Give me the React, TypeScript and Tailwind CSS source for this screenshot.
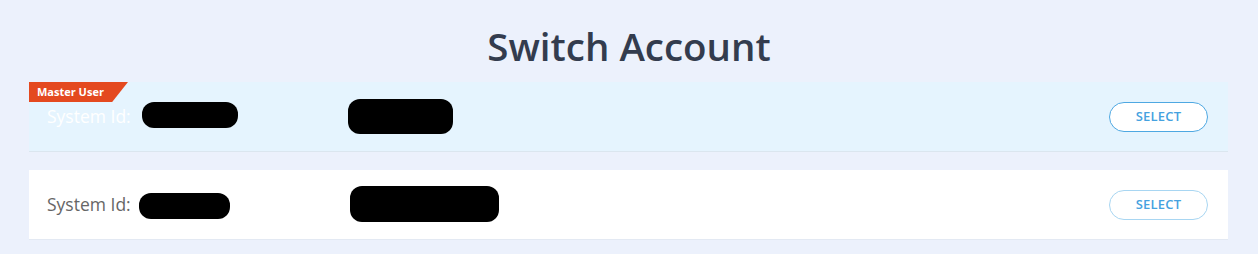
import React from "react";

function Blob({ w, h, className = "" }: { w: string; h: string; className?: string }) {
  return <div className={`bg-black rounded-[12px] ${w} ${h} ${className}`} />;
}

export default function App() {
  const font = { fontFamily: '"Open Sans", "Noto Sans", sans-serif' };
  return (
    <div className="w-[1258px] h-[254px] bg-[#ecf1fc] overflow-hidden" style={font}>
      <h1 className="mt-[22px] text-center text-[38.5px] leading-[48px] font-semibold text-[#333c4e]">
        Switch Account
      </h1>
      <div className="mt-[12px] pl-[29px] pr-[30px] flex flex-col gap-[18px]">
        <div className="relative h-[70px] bg-[#e5f4fe] border-b border-[#dbe6ef] flex items-center pl-[18px] pr-[20px]">
          <div
            className="absolute left-0 top-0 h-[20px] w-[99px] bg-[#e4491f] text-white text-[11px] font-bold leading-[20px] pl-[8px]"
            style={{ clipPath: "polygon(0 0, 100% 0, 84% 100%, 0 100%)" }}
          >
            Master User
          </div>
          <span className="text-[17.5px] text-white leading-none">System Id:</span>
          <Blob w="w-[96px]" h="h-[26px]" className="ml-[11px] -mt-[3px]" />
          <Blob w="w-[105px]" h="h-[35px]" className="ml-[110px]" />
          <button className="ml-auto w-[99px] h-[30px] rounded-full border border-[#4ea8e2] bg-white text-[13px] font-semibold text-[#45a2e0] tracking-[0.2px]">
            SELECT
          </button>
        </div>
        <div className="h-[70px] bg-white border-b border-[#e3e9f3] flex items-center pl-[18px] pr-[20px]">
          <span className="text-[17.5px] text-[#666666] leading-none">System Id:</span>
          <Blob w="w-[91px]" h="h-[26px]" className="ml-[8px] mt-[2px]" />
          <Blob w="w-[149px]" h="h-[36px]" className="ml-[120px] -mt-[2px]" />
          <button className="ml-auto w-[99px] h-[30px] rounded-full border border-[#a8d6f2] bg-white text-[13px] font-semibold text-[#45a2e0] tracking-[0.2px]">
            SELECT
          </button>
        </div>
      </div>
    </div>
  );
}
